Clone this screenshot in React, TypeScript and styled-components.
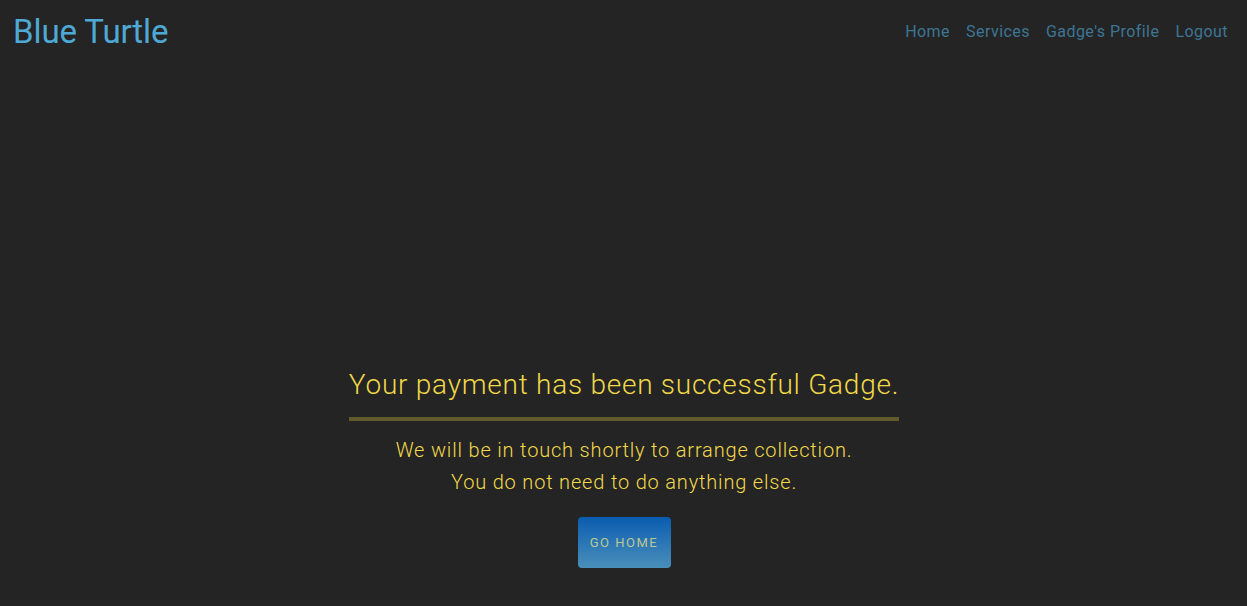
import React from "react";
import styled, { createGlobalStyle } from "styled-components";

const Global = createGlobalStyle`
  html, body { margin: 0; padding: 0; background: #242424; }
  body { font-family: Roboto, "Noto Sans", sans-serif; }
  * { box-sizing: border-box; }
`;

const Page = styled.div`
  min-height: 606px;
  background: #242424;
  display: flex;
  flex-direction: column;
`;

const Header = styled.header`
  display: flex;
  align-items: center;
  justify-content: space-between;
  height: 62px;
  padding: 0 19px 0 13px;
`;

const Brand = styled.a`
  font-size: 33px;
  font-weight: 400;
  color: #4ea9d6;
  text-decoration: none;
  letter-spacing: -0.1px;
`;

const Nav = styled.nav`
  display: flex;
  gap: 16px;
  align-items: center;
`;

const NavLink = styled.a`
  font-size: 16px;
  font-weight: 400;
  letter-spacing: 0.45px;
  color: #3d7594;
  text-decoration: none;
`;

const Main = styled.main`
  display: flex;
  flex-direction: column;
  align-items: center;
  padding: 305px 0 0 1px;
`;

const Card = styled.section`
  width: 550px;
  display: flex;
  flex-direction: column;
  align-items: center;
`;

const Title = styled.h1`
  margin: 0;
  font-size: 28px;
  font-weight: 300;
  color: #f0d848;
  letter-spacing: 0.75px;
  line-height: 36px;
  white-space: nowrap;
`;

const Divider = styled.hr`
  width: 100%;
  height: 4px;
  margin: 14px 0 13px;
  border: none;
  background: #615a2c;
`;

const Message = styled.p`
  margin: 0;
  font-size: 20px;
  font-weight: 300;
  line-height: 32px;
  letter-spacing: 0.82px;
  color: #f2da4a;
  text-align: center;
  white-space: nowrap;
`;

const HomeButton = styled.button`
  margin-top: 19px;
  width: 93px;
  height: 51px;
  border: none;
  border-radius: 4px;
  background: linear-gradient(to bottom, #0a5cb0, #4a8fba);
  color: #bcc894;
  font-family: Roboto, "Noto Sans", sans-serif;
  font-size: 13px;
  letter-spacing: 1.5px;
  text-transform: uppercase;
  cursor: pointer;
`;

export default function App() {
  return (
    <Page>
      <Global />
      <Header>
        <Brand href="#">Blue Turtle</Brand>
        <Nav>
          <NavLink href="#">Home</NavLink>
          <NavLink href="#">Services</NavLink>
          <NavLink href="#">Gadge's Profile</NavLink>
          <NavLink href="#">Logout</NavLink>
        </Nav>
      </Header>
      <Main>
        <Card>
          <Title>Your payment has been successful Gadge.</Title>
          <Divider />
          <Message>We will be in touch shortly to arrange collection.</Message>
          <Message>You do not need to do anything else.</Message>
          <HomeButton>Go Home</HomeButton>
        </Card>
      </Main>
    </Page>
  );
}
